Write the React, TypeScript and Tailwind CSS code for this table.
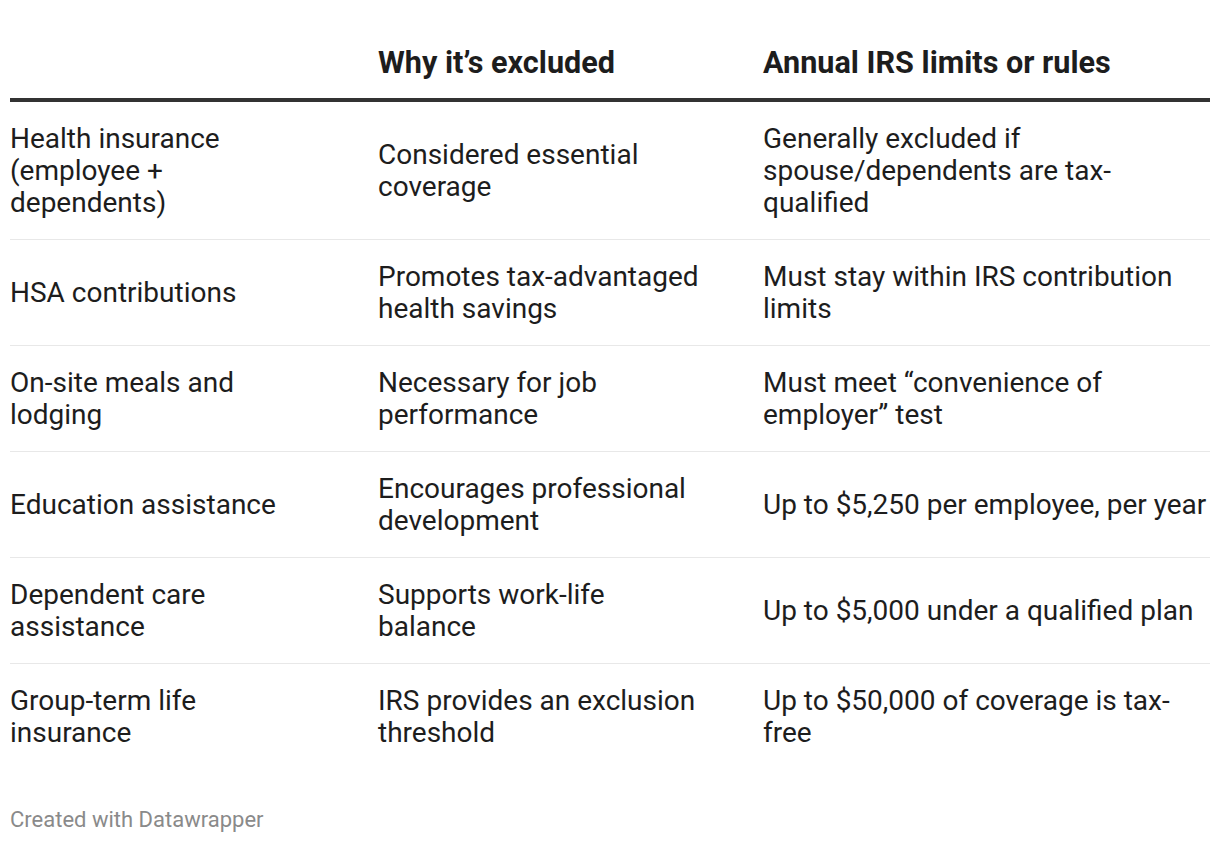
import React from "react";

const rows: [string, string, string][] = [
  ["Health insurance (employee + dependents)", "Considered essential coverage", "Generally excluded if spouse/dependents are tax-qualified"],
  ["HSA contributions", "Promotes tax-advantaged health savings", "Must stay within IRS contribution limits"],
  ["On-site meals and lodging", "Necessary for job performance", "Must meet \u201cconvenience of employer\u201d test"],
  ["Education assistance", "Encourages professional development", "Up to $5,250 per employee, per year"],
  ["Dependent care assistance", "Supports work-life balance", "Up to $5,000 under a qualified plan"],
  ["Group-term life insurance", "IRS provides an exclusion threshold", "Up to $50,000 of coverage is tax-free"],
];

const pad = ["pr-[68px]", "pr-[60px]", "pr-0"];

export default function App() {
  return (
    <div className="w-[1220px] h-[844px] bg-white px-[10px] pt-[45px] text-[#1d1d1d]" style={{ fontFamily: "Roboto, 'Liberation Sans', sans-serif" }}>
      <div className="grid grid-cols-[368px_385px_447px] w-[1200px]">
        <div className="border-b-[4px] border-[#333333]"></div>
        <div className="border-b-[4px] border-[#333333] flex items-end text-[30.6px] font-bold leading-[36px] pb-[17px]">Why it’s excluded</div>
        <div className="border-b-[4px] border-[#333333] flex items-end text-[30.6px] font-bold leading-[36px] pb-[17px]">Annual IRS limits or rules</div>
        {rows.map((r, i) => (
          <React.Fragment key={i}>
            {r.map((c, j) => (
              <div
                key={j}
                className={`flex items-center text-[28px] leading-[32px] pt-[21px] pb-[20px] ${pad[j]} ${i < rows.length - 1 ? "border-b border-[#e8e8e8]" : ""}`}
              >
                {c}
              </div>
            ))}
          </React.Fragment>
        ))}
      </div>
      <div className="mt-[38px] text-[22px] leading-[26px] text-[#8a8a8a]">Created with Datawrapper</div>
    </div>
  );
}
